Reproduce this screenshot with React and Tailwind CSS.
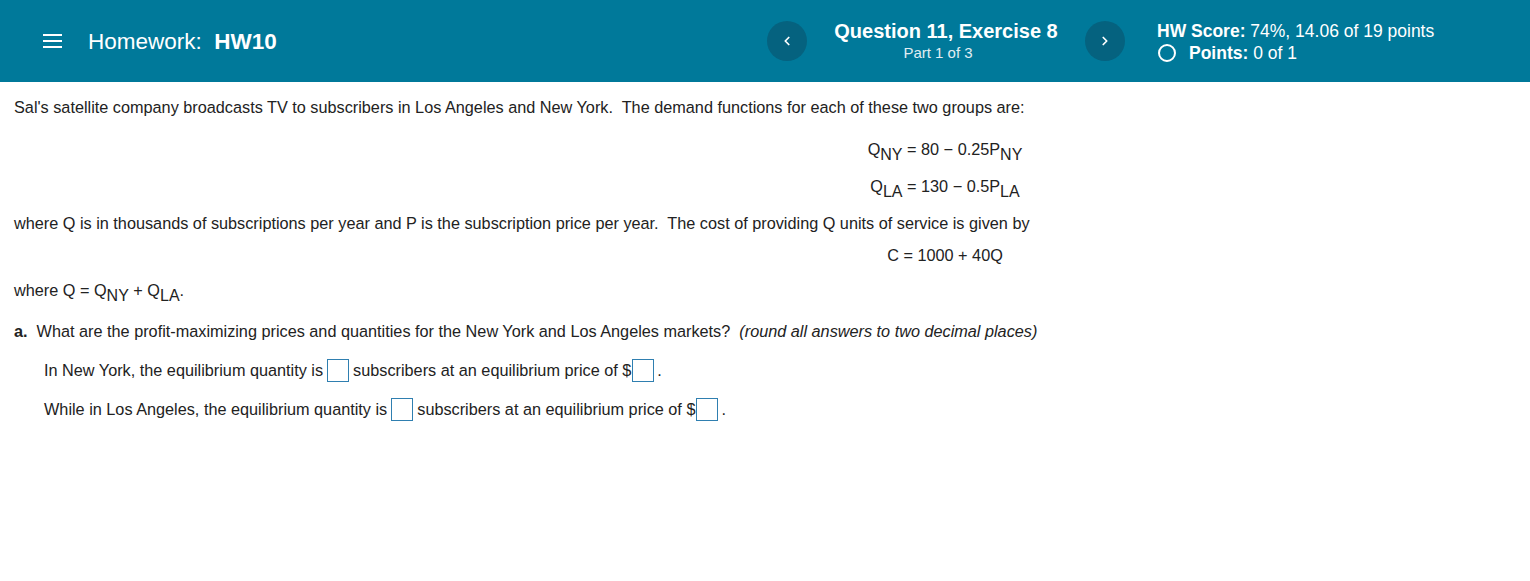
import { ChevronLeft, ChevronRight } from 'lucide-react';

const font = { fontFamily: '"Liberation Sans", Arial, sans-serif' };

const Sub = ({ children }) => (
  <sub className="relative top-[5px] align-baseline text-[16px]">{children}</sub>
);

// answer box; the one after "$" sits tight against it
const Blank = ({ tight }) => (
  <span
    className={
      tight
        ? 'inline-block h-[23px] w-[22px] align-middle border border-[#2f7fb0] bg-white ml-[1px] mr-[3px] -mt-[2px]'
        : 'inline-block h-[23px] w-[22px] align-middle border border-[#2f7fb0] bg-white mx-[4px] -mt-[2px]'
    }
  />
);

export default function App() {
  return (
    <div style={font} className="min-h-[581px] bg-white text-[#222]">
      {/* Header */}
      <header className="flex h-[82px] items-center bg-[#00799a] text-white">
        <div className="flex w-[767px] items-center">
          <svg className="ml-[43px]" width="19" height="16" viewBox="0 0 19 16">
            <rect x="0" y="1" width="19" height="2" fill="white" />
            <rect x="0" y="7" width="19" height="2" fill="white" />
            <rect x="0" y="13" width="19" height="2" fill="white" />
          </svg>
          <div className="ml-[26px] mt-[2px] text-[22.5px]">
            Homework:&nbsp; <span className="font-bold">HW10</span>
          </div>
        </div>
        <button className="flex h-[40px] w-[40px] items-center justify-center rounded-full bg-[#05627f]">
          <ChevronLeft size={14} strokeWidth={3} />
        </button>
        <div className="flex w-[278px] flex-col items-center">
          <div className="text-[20px] font-bold leading-[24px]">Question 11, Exercise 8</div>
          <div className="pr-[16px] text-[15px] leading-[20px] text-[#e0eef3]">Part 1 of 3</div>
        </div>
        <button className="flex h-[40px] w-[40px] items-center justify-center rounded-full bg-[#05627f]">
          <ChevronRight size={14} strokeWidth={3} />
        </button>
        <div className="ml-[32px] mt-[2px] flex flex-col text-[17.5px] leading-[22px]">
          <div>
            <span className="font-bold">HW Score:</span> 74%, 14.06 of 19 points
          </div>
          <div className="flex items-center">
            <span className="ml-[1px] inline-block h-[18px] w-[18px] rounded-full border-[2.5px] border-white" />
            <span className="ml-[13px] font-bold">Points:</span>&nbsp;0 of 1
          </div>
        </div>
      </header>

      {/* Body */}
      <main className="px-[14px] text-[16.25px]">
        <p className="mt-[15px] leading-[20px]">
          Sal's satellite company broadcasts TV to subscribers in Los Angeles and New York.&nbsp; The demand functions for each of these two groups are:
        </p>
        <div className="ml-[838px] flex w-[186px] flex-col items-center">
          <div className="mt-[22px] leading-[20px]">
            Q<Sub>NY</Sub> = 80 − 0.25P<Sub>NY</Sub>
          </div>
          <div className="mt-[17px] leading-[20px]">
            Q<Sub>LA</Sub> = 130 − 0.5P<Sub>LA</Sub>
          </div>
        </div>
        <p className="mt-[17px] leading-[20px]">
          where Q is in thousands of subscriptions per year and P is the subscription price per year.&nbsp; The cost of providing Q units of service is given by
        </p>
        <div className="ml-[838px] mt-[12px] flex w-[186px] justify-center leading-[20px]">
          C = 1000 + 40Q
        </div>
        <p className="mt-[15px] leading-[20px]">
          where Q = Q<Sub>NY</Sub> + Q<Sub>LA</Sub>.
        </p>
        <p className="mt-[21px] leading-[20px]">
          <span className="font-bold">a.</span>&nbsp; What are the profit-maximizing prices and quantities for the New York and Los Angeles markets?&nbsp; <span className="italic">(round all answers to two decimal places)</span>
        </p>
        <div className="ml-[30px] mt-[18px] leading-[22px]">
          In New York, the equilibrium quantity is<Blank />subscribers at an equilibrium price of $<Blank tight />.
        </div>
        <div className="ml-[30px] mt-[16px] leading-[22px]">
          While in Los Angeles, the equilibrium quantity is<Blank />subscribers at an equilibrium price of $<Blank tight />.
        </div>
      </main>
    </div>
  );
}
